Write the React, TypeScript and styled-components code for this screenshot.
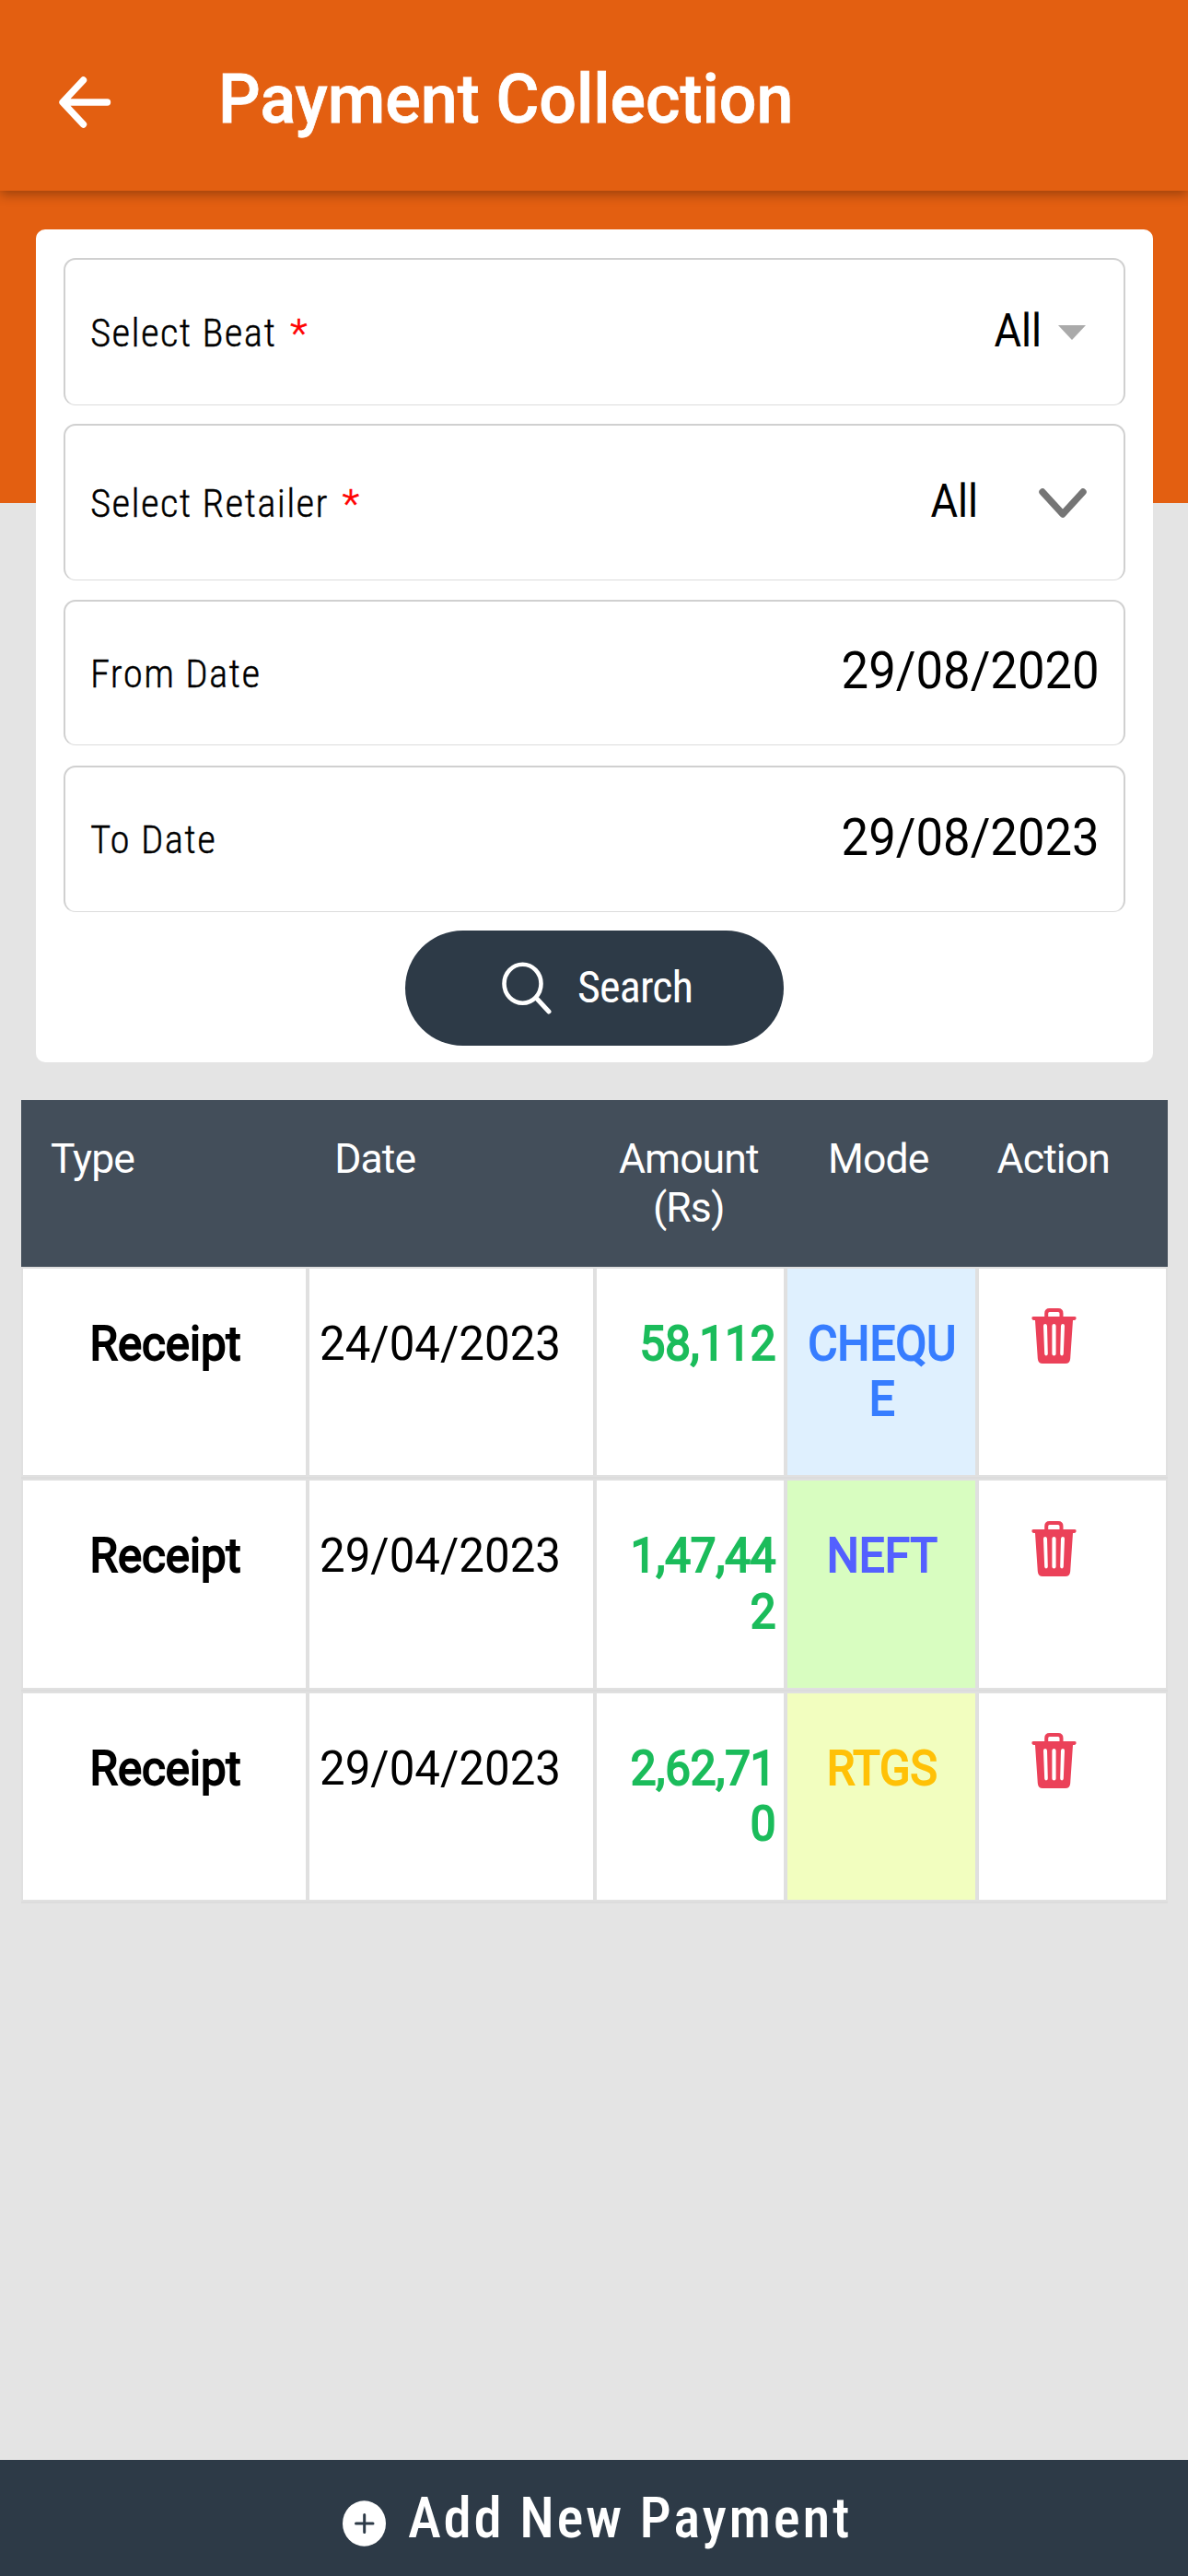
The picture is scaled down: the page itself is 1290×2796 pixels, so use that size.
import React from "react";
import styled, { createGlobalStyle } from "styled-components";

type Mode = "CHEQUE" | "NEFT" | "RTGS";

interface Payment {
  type: string;
  date: string;
  amount: string;
  mode: Mode;
}

const payments: Payment[] = [
  { type: "Receipt", date: "24/04/2023", amount: "58,112", mode: "CHEQUE" },
  { type: "Receipt", date: "29/04/2023", amount: "1,47,442", mode: "NEFT" },
  { type: "Receipt", date: "29/04/2023", amount: "2,62,710", mode: "RTGS" },
];

const modeColors: Record<Mode, { text: string; bg: string }> = {
  CHEQUE: { text: "#377dff", bg: "#dff0fe" },
  NEFT: { text: "#5460ff", bg: "#d8fdc0" },
  RTGS: { text: "#ffc107", bg: "#f2febf" },
};

const BackIcon = () => (
  <svg width="58" height="58" viewBox="0 0 58 58" fill="none" stroke="#fff" strokeWidth="7.4" strokeLinecap="round" strokeLinejoin="round">
    <path d="M27.5 5 L5 29 L27.5 53 M5.5 29 H53.5" />
  </svg>
);

const ChevronIcon = () => (
  <svg width="52" height="32" viewBox="0 0 52 32" fill="none" stroke="#757575" strokeWidth="7.4" strokeLinecap="round" strokeLinejoin="round">
    <path d="M4 4 L26 28 L48 4" />
  </svg>
);

const SearchIcon = () => (
  <svg width="54" height="57" viewBox="0 0 54 57" fill="none" stroke="#fff" strokeLinecap="round">
    <ellipse cx="22.5" cy="23.8" rx="20" ry="21" strokeWidth="4.6" />
    <path d="M37.5 39.5 L51 54" strokeWidth="5" />
  </svg>
);

const TrashIcon = () => (
  <svg width="49" height="60" viewBox="0 0 49 60">
    <path d="M16.2 10 V5.5 Q16.2 2 19.7 2 H29 Q32.5 2 32.5 5.5 V10" fill="none" stroke="#eb4159" strokeWidth="4" />
    <path
      fill="#eb4159"
      fillRule="evenodd"
      d="M2 9 H47 Q49 9 48.6 11.2 Q48.3 13 46.3 13 H45 L42.2 54.5 Q41.8 60 36.8 60 H12.2 Q7.2 60 6.8 54.5 L4 13 H2.7 Q0.7 13 0.4 11.2 Q0 9 2 9 Z M13 19 L14.2 49.5 Q14.5 51.4 16 51.4 Q17.9 51.3 17.8 49.3 L17 19 Q16.7 17 15 17 Q13 17.2 13 19 Z M22.4 19 V49.4 Q22.5 51.4 24.5 51.4 Q26.5 51.4 26.6 49.4 V19 Q26.5 17 24.5 17 Q22.5 17 22.4 19 Z M32 19 L31.2 49.3 Q31.1 51.3 33 51.4 Q34.5 51.4 34.8 49.5 L36 19 Q36 17.2 34 17 Q32.3 17 32 19 Z"
    />
  </svg>
);

const PlusIcon = () => (
  <svg width="47" height="50" viewBox="0 0 47 50">
    <ellipse cx="23.5" cy="25" rx="23.5" ry="24.7" fill="#fff" />
    <path d="M14.5 25 H33 M23.7 15.5 V34.5" stroke="#2d3a47" strokeWidth="3" strokeLinecap="round" />
  </svg>
);

export default function App() {
  return (
    <Page>
      <GlobalStyle />
      <Header>
        <BackIcon />
        <Title>Payment Collection</Title>
      </Header>

      <FilterCard>
        <Field $height={160}>
          <Label>Select Beat <em>*</em></Label>
          <Picker $gap={18} $end={41}>
            <PickerValue>All</PickerValue>
            <Caret />
          </Picker>
        </Field>
        <Field $height={170} $gap={20}>
          <Label>Select Retailer <em>*</em></Label>
          <Picker $gap={66} $end={40}>
            <PickerValue>All</PickerValue>
            <ChevronIcon />
          </Picker>
        </Field>
        <Field $height={158} $gap={21}>
          <Label>From Date</Label>
          <DateValue>29/08/2020</DateValue>
        </Field>
        <Field $height={159} $gap={22}>
          <Label>To Date</Label>
          <DateValue>29/08/2023</DateValue>
        </Field>
        <SearchButton>
          <SearchIcon />
          <span>Search</span>
        </SearchButton>
      </FilterCard>

      <Table>
        <HeadRow>
          <HeadCell $align="left">Type</HeadCell>
          <HeadCell $align="left">Date</HeadCell>
          <HeadCell $end={3}>Amount (Rs)</HeadCell>
          <HeadCell $end={6}>Mode</HeadCell>
          <HeadCell $end={41}>Action</HeadCell>
        </HeadRow>
        {payments.map((payment) => (
          <Row key={payment.amount}>
            <Cell>
              <CellText $align="center" $bold>{payment.type}</CellText>
            </Cell>
            <Cell>
              <CellText $align="left">{payment.date}</CellText>
            </Cell>
            <Cell>
              <CellText $align="right" $bold $color="#1bbc5b">{payment.amount}</CellText>
            </Cell>
            <Cell $bg={modeColors[payment.mode].bg}>
              <CellText $align="center" $bold $color={modeColors[payment.mode].text}>
                {payment.mode}
              </CellText>
            </Cell>
            <ActionCell>
              <TrashIcon />
            </ActionCell>
          </Row>
        ))}
      </Table>

      <Footer>
        <PlusIcon />
        <span>Add New Payment</span>
      </Footer>
    </Page>
  );
}

const GlobalStyle = createGlobalStyle`
  * {
    box-sizing: border-box;
  }
  body {
    margin: 0;
    font-family: Roboto, sans-serif;
  }
  svg {
    display: block;
    flex-shrink: 0;
  }
`;

const Page = styled.main`
  width: 1290px;
  height: 2796px;
  display: flex;
  flex-direction: column;
  background: linear-gradient(#e35f11 546px, #e4e4e4 546px);
`;

const Header = styled.header`
  height: 207px;
  flex-shrink: 0;
  padding: 14px 0 0 63px;
  display: flex;
  align-items: center;
  background: #e35f11;
  box-shadow: 0 4px 12px rgba(0, 0, 0, 0.32);
`;

const Title = styled.h1`
  margin: -7px 0 0 116px;
  font-size: 75px;
  font-weight: 500;
  line-height: 90px;
  color: #fff;
  white-space: nowrap;
  -webkit-text-stroke: 0.8px #fff;
  transform: scaleX(0.957);
  transform-origin: left;
`;

const FilterCard = styled.section`
  width: 1213px;
  height: 904px;
  flex-shrink: 0;
  margin: 41.5px 0 0 39px;
  padding: 31.5px 30px 0;
  display: flex;
  flex-direction: column;
  background: #fff;
  border-radius: 10px;
`;

const Field = styled.div<{ $height: number; $gap?: number }>`
  height: ${(p) => p.$height}px;
  margin-top: ${(p) => p.$gap || 0}px;
  padding-left: 27px;
  display: flex;
  align-items: center;
  justify-content: space-between;
  border: 2px solid #d0d0d0;
  border-bottom: 1.5px solid #dcdcdc;
  border-radius: 13px;
`;

const Label = styled.label`
  font-size: 43px;
  font-weight: 350;
  font-stretch: 85%;
  letter-spacing: 1.3px;
  line-height: 60px;
  color: #000;
  -webkit-text-stroke: 0.4px;
  em {
    margin-left: 4px;
    font-style: normal;
    color: #ff0000;
    -webkit-text-stroke: 0.6px;
  }
`;

const Picker = styled.div<{ $gap: number; $end: number }>`
  display: flex;
  align-items: center;
  gap: ${(p) => p.$gap}px;
  padding-right: ${(p) => p.$end}px;
`;

const PickerValue = styled.span`
  margin-top: -3px;
  font-size: 49.3px;
  line-height: 60px;
  color: #000;
  transform: scaleX(0.92);
  transform-origin: right;
`;

const Caret = styled.i`
  border: 15.5px solid transparent;
  border-top: 16px solid #aaa;
  border-bottom: 0;
`;

const DateValue = styled.span`
  margin: -5px 26px 0 0;
  font-size: 55px;
  line-height: 64px;
  color: #000;
  transform: scaleX(0.957);
  transform-origin: right;
`;

const SearchButton = styled.button`
  width: 411px;
  height: 125px;
  margin: 20px auto 0;
  padding: 0 0 1px 105px;
  display: flex;
  align-items: center;
  gap: 28px;
  border: none;
  border-radius: 63px;
  background: #2d3a47;
  color: #fff;
  font-family: inherit;
  font-size: 48px;
  font-stretch: 85%;
  letter-spacing: -0.8px;
  line-height: 60px;
`;

const Table = styled.section`
  width: 1245px;
  margin: 41px 0 0 23px;
  flex-shrink: 0;
`;

const HeadRow = styled.div`
  height: 181px;
  display: grid;
  grid-template-columns: 3fr 3fr 2fr 2fr 2fr;
  background: #434e5a;
`;

const HeadCell = styled.div<{ $align?: string; $end?: number }>`
  padding: 38px ${(p) => p.$end || 0}px 0 ${(p) => (p.$align ? 32 : 0)}px;
  text-align: ${(p) => p.$align || "center"};
  font-size: 44.5px;
  line-height: 53px;
  color: #fff;
  letter-spacing: -0.9px;

  &:nth-child(2) {
    padding-left: 29px;
  }
`;

const Row = styled.div`
  height: 230.6px;
  display: grid;
  grid-template-columns: 3fr 3fr 2fr 2fr 2fr;
  border-bottom: 2px solid #dcdcdc;
`;

const Cell = styled.div<{ $bg?: string }>`
  padding: 52px 9px 0 11px;
  border: 2px solid #e0e0e0;
  background: ${(p) => p.$bg || "#fff"};
`;

// regular weight thickened with a stroke, the way android fakes bold
const CellText = styled.div<{ $align: string; $bold?: boolean; $color?: string }>`
  font-size: 51.4px;
  line-height: 60.4px;
  text-align: ${(p) => p.$align};
  color: ${(p) => p.$color || "#000"};
  -webkit-text-stroke: ${(p) => (p.$bold ? "2px" : "0")};
  word-break: break-all;
  transform: scaleX(0.958);
  transform-origin: ${(p) => p.$align};
`;

const ActionCell = styled(Cell)`
  padding: 43.5px 39px 0 0;
  display: flex;
  justify-content: center;
  align-items: flex-start;
`;

const Footer = styled.footer`
  height: 126.5px;
  margin-top: auto;
  flex-shrink: 0;
  padding: 1px 0 0 372px;
  display: flex;
  align-items: center;
  gap: 24px;
  background: #2d3a47;
  color: #fff;
  font-size: 61px;
  font-weight: 500;
  font-stretch: 85%;
  letter-spacing: 2.7px;

  svg {
    margin-top: 11px;
  }
`;
